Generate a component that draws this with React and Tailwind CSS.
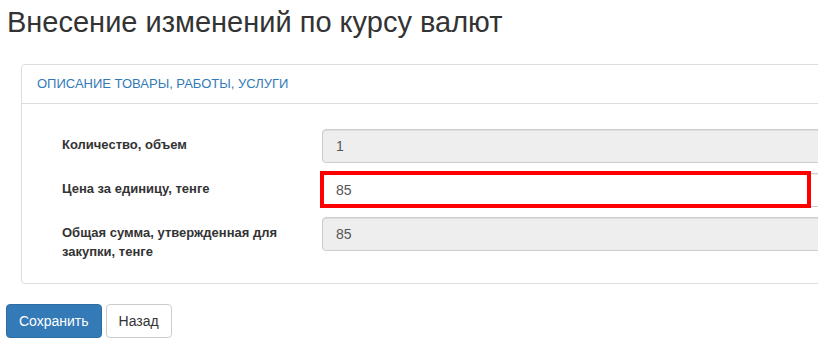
const rows = [
  { label: "Количество, объем", value: "1", readOnly: true },
  { label: "Цена за единицу, тенге", value: "85", readOnly: false, marked: true },
  { label: "Общая сумма, утвержденная для закупки, тенге", value: "85", readOnly: true },
];

export default function App() {
  return (
    <div className="w-[818px] h-[351px] overflow-hidden bg-white text-[13px] text-[#333] font-['Liberation_Sans',Arial,sans-serif]">
      <h1 className="pl-[7px] pt-[4px] text-[29px] leading-[36px] font-normal text-[#333]">
        Внесение изменений по курсу валют
      </h1>
      <div className="ml-[21px] mt-[24px] w-[900px] rounded-[4px] border border-[#ddd]">
        <div className="h-[39px] px-[15px] flex items-center border-b border-[#ddd] text-[13px] text-[#337ab7]">
          ОПИСАНИЕ ТОВАРЫ, РАБОТЫ, УСЛУГИ
        </div>
        <div className="pl-[40px] pt-[25px] pb-[22px] flex flex-col gap-[10px]">
          {rows.map((row) => (
            <FormRow key={row.label} {...row} />
          ))}
        </div>
      </div>
      <div className="ml-[6px] mt-[20px] flex gap-[4px]">
        <button className="h-[34px] px-[12px] rounded-[4px] border border-[#2e6da4] bg-[#337ab7] text-white text-[14px]">
          Сохранить
        </button>
        <button className="h-[34px] px-[12px] rounded-[4px] border border-[#ccc] bg-white text-[#333] text-[14px]">
          Назад
        </button>
      </div>
    </div>
  );
}

function FormRow({ label, value, readOnly, marked }) {
  return (
    <div className="flex">
      <label className="w-[260px] pt-[6px] pr-[20px] font-bold leading-[19px]">{label}</label>
      <div className="relative flex-1">
        <div
          className={`h-[34px] px-[13px] flex items-center rounded-[4px] border border-[#ccc] text-[#555] text-[14px] shadow-[inset_0_1px_1px_rgba(0,0,0,0.075)] ${
            readOnly ? "bg-[#eee]" : "bg-white"
          }`}
        >
          {value}
        </div>
        {marked && (
          <div className="absolute left-[-2px] top-[-2px] w-[491px] h-[37px] border-[4px] border-[#ff0000]" />
        )}
      </div>
    </div>
  );
}
